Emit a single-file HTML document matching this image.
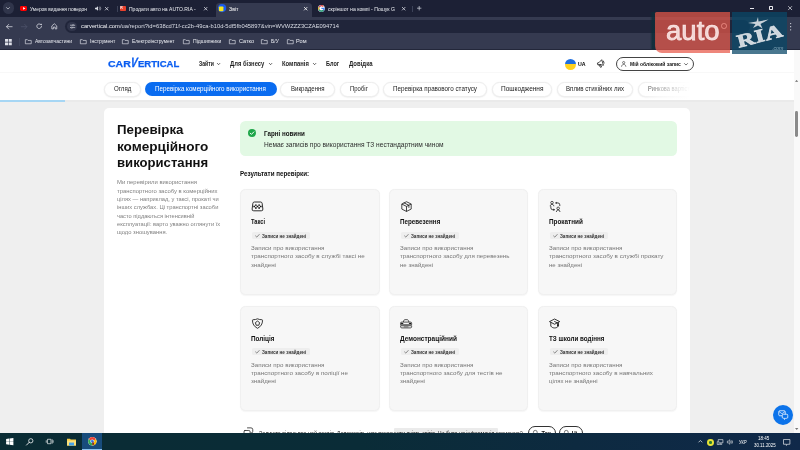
<!DOCTYPE html>
<html lang="uk"><head><meta charset="utf-8"><title>Звіт</title>
<style>
*{box-sizing:border-box;margin:0;padding:0}
html,body{width:800px;height:450px;overflow:hidden;background:#efefef;font-family:"Liberation Sans",sans-serif;}
#s{position:relative;width:800px;height:450px;overflow:hidden;background:#efefef;will-change:transform}
.a{position:absolute;white-space:nowrap}
svg{overflow:visible}
</style></head><body><div id="s">
<div class="a" style="left:0.00px;top:49.50px;width:793.50px;height:384.00px;background:#efefef;"></div>
<div class="a" style="left:104.20px;top:107.70px;width:586.00px;height:340.00px;background:#fff;border-radius:5px;"></div>
<div class="a" style="left:0.00px;top:49.50px;width:793.50px;height:51.00px;background:#fff;"></div>
<div class="a" style="left:0.00px;top:72.00px;width:793.50px;height:0.60px;background:#f8f8f8;"></div>
<div class="a" style="left:0.00px;top:100.30px;width:793.50px;height:1.80px;background:#eaeaea;"></div>
<div class="a" style="left:0.00px;top:99.90px;width:65.30px;height:2.30px;background:#a6d6f4;"></div>
<div class="a" style="left:108.00px;top:58.61px;font-size:8.80px;line-height:10.56px;transform:scaleX(1.1959);transform-origin:0 0;font-weight:bold;color:#0a5df0;-webkit-text-stroke:.25px #0a5df0;">CAR</div>
<div class="a" style="left:129.400px;top:60.300px;font-size:8.400px;line-height:10px;font-weight:bold;color:#0a5df0;-webkit-text-stroke:.2px #0a5df0;transform:skewX(-14deg) scale(1.18,1.62);transform-origin:0 100%">V</div>
<div class="a" style="left:137.80px;top:58.61px;font-size:8.80px;line-height:10.56px;transform:scaleX(1.0805);transform-origin:0 0;font-weight:bold;color:#0a5df0;-webkit-text-stroke:.25px #0a5df0;">ERTICAL</div>
<div class="a" style="left:198.60px;top:60.16px;font-size:6.40px;line-height:7.68px;transform:scaleX(0.8023);transform-origin:0 0;font-weight:bold;color:#1f1f1f;">Зайти</div>
<div class="a" style="left:230.30px;top:60.16px;font-size:6.40px;line-height:7.68px;transform:scaleX(0.9171);transform-origin:0 0;font-weight:bold;color:#1f1f1f;">Для бізнесу</div>
<div class="a" style="left:281.80px;top:60.16px;font-size:6.40px;line-height:7.68px;transform:scaleX(0.9191);transform-origin:0 0;font-weight:bold;color:#1f1f1f;">Компанія</div>
<div class="a" style="left:325.80px;top:60.16px;font-size:6.40px;line-height:7.68px;transform:scaleX(0.8709);transform-origin:0 0;font-weight:bold;color:#1f1f1f;">Блог</div>
<div class="a" style="left:349.00px;top:60.16px;font-size:6.40px;line-height:7.68px;transform:scaleX(0.9368);transform-origin:0 0;font-weight:bold;color:#1f1f1f;">Довідка</div>
<svg class="a" style="left:216.70px;top:63.30px;" width="3.20" height="2.10" viewBox="0 0 8 5"><path d="M1 1l3 3 3-3" fill="none" stroke="#222" stroke-width="1.9" stroke-linecap="round" stroke-linejoin="round"/></svg>
<svg class="a" style="left:268.50px;top:63.30px;" width="3.20" height="2.10" viewBox="0 0 8 5"><path d="M1 1l3 3 3-3" fill="none" stroke="#222" stroke-width="1.9" stroke-linecap="round" stroke-linejoin="round"/></svg>
<svg class="a" style="left:312.60px;top:63.30px;" width="3.20" height="2.10" viewBox="0 0 8 5"><path d="M1 1l3 3 3-3" fill="none" stroke="#222" stroke-width="1.9" stroke-linecap="round" stroke-linejoin="round"/></svg>
<div class="a" style="left:564.6px;top:58.6px;width:11px;height:11px;border-radius:50%;background:linear-gradient(#1e6fe0 50%,#ffd21f 50%)"></div>
<div class="a" style="left:578.30px;top:61.08px;font-size:5.20px;line-height:6.24px;transform:scaleX(1.0119);transform-origin:0 0;font-weight:bold;color:#000;">UA</div>
<svg class="a" style="left:596.00px;top:58.40px;" width="10.00" height="10.40" viewBox="0 0 24 25"><g transform="rotate(-18 12 12)"><path d="M3.500 9.500h4.500l8-4.500v14l-8-4.500H3.500z" fill="none" stroke="#222" stroke-width="1.800" stroke-linejoin="round"/><path d="M6 14.500l1.500 7h3l-1.500-7M19 9.500v5" fill="none" stroke="#222" stroke-width="1.800" stroke-linejoin="round" stroke-linecap="round"/></g></svg>
<div class="a" style="left:616px;top:57.4px;width:77.6px;height:13.4px;border:.6px solid #444;border-radius:7px;background:#fff"></div>
<svg class="a" style="left:621.30px;top:61.20px;" width="5.40" height="5.80" viewBox="0 0 12 13"><circle cx="6" cy="3.6" r="2.5" fill="none" stroke="#222" stroke-width="1.3"/><path d="M1.2 12c.4-3 2.3-4.3 4.8-4.3s4.4 1.300 4.800 4.300" fill="none" stroke="#222" stroke-width="1.3" stroke-linecap="round"/></svg>
<div class="a" style="left:629.80px;top:60.87px;font-size:5.50px;line-height:6.60px;transform:scaleX(0.9095);transform-origin:0 0;font-weight:bold;color:#111;">Мій обліковий запис</div>
<svg class="a" style="left:684.20px;top:62.80px;" width="4.00" height="2.60" viewBox="0 0 8 5"><path d="M1 1l3 3 3-3" fill="none" stroke="#222" stroke-width="1.3" stroke-linecap="round" stroke-linejoin="round"/></svg>
<div class="a" style="left:104.40px;top:81.8px;width:36.60px;height:14.8px;border-radius:7.4px;background:#fff;border:.6px solid #eeeeee;box-shadow:0 .5px 1.6px rgba(0,0,0,.09)"></div>
<div class="a" style="left:114.00px;top:85.39px;font-size:6.50px;line-height:7.80px;transform:scaleX(0.9408);transform-origin:0 0;color:#222;">Огляд</div>
<div class="a" style="left:145.00px;top:81.6px;width:131.80px;height:14.5px;border-radius:7.25px;background:#0a6cf0"></div>
<div class="a" style="left:155.40px;top:85.32px;font-size:6.60px;line-height:7.92px;transform:scaleX(0.9452);transform-origin:0 0;color:#fff;">Перевірка комерційного використання</div>
<div class="a" style="left:279.60px;top:81.8px;width:55.80px;height:14.8px;border-radius:7.4px;background:#fff;border:.6px solid #eeeeee;box-shadow:0 .5px 1.6px rgba(0,0,0,.09)"></div>
<div class="a" style="left:291.00px;top:85.39px;font-size:6.50px;line-height:7.80px;transform:scaleX(0.9295);transform-origin:0 0;color:#222;">Викрадення</div>
<div class="a" style="left:339.50px;top:81.8px;width:39.10px;height:14.8px;border-radius:7.4px;background:#fff;border:.6px solid #eeeeee;box-shadow:0 .5px 1.6px rgba(0,0,0,.09)"></div>
<div class="a" style="left:350.00px;top:85.39px;font-size:6.50px;line-height:7.80px;transform:scaleX(0.9156);transform-origin:0 0;color:#222;">Пробіг</div>
<div class="a" style="left:383.20px;top:81.8px;width:103.70px;height:14.8px;border-radius:7.4px;background:#fff;border:.6px solid #eeeeee;box-shadow:0 .5px 1.6px rgba(0,0,0,.09)"></div>
<div class="a" style="left:393.00px;top:85.39px;font-size:6.50px;line-height:7.80px;transform:scaleX(0.9635);transform-origin:0 0;color:#222;">Перевірка правового статусу</div>
<div class="a" style="left:492.40px;top:81.8px;width:59.60px;height:14.8px;border-radius:7.4px;background:#fff;border:.6px solid #eeeeee;box-shadow:0 .5px 1.6px rgba(0,0,0,.09)"></div>
<div class="a" style="left:501.00px;top:85.39px;font-size:6.50px;line-height:7.80px;transform:scaleX(1.0036);transform-origin:0 0;color:#222;">Пошкодження</div>
<div class="a" style="left:556.90px;top:81.8px;width:76.40px;height:14.8px;border-radius:7.4px;background:#fff;border:.6px solid #eeeeee;box-shadow:0 .5px 1.6px rgba(0,0,0,.09)"></div>
<div class="a" style="left:566.00px;top:85.39px;font-size:6.50px;line-height:7.80px;transform:scaleX(0.9405);transform-origin:0 0;color:#222;">Вплив стихійних лих</div>
<div class="a" style="left:638.00px;top:81.8px;width:82.00px;height:14.8px;border-radius:7.4px;background:#fff;border:.6px solid #eeeeee;box-shadow:0 .5px 1.6px rgba(0,0,0,.09)"></div>
<div class="a" style="left:648.00px;top:85.39px;font-size:6.50px;line-height:7.80px;transform:scaleX(0.8756);transform-origin:0 0;color:#222;">Ринкова вартість</div>
<div class="a" style="left:640px;top:78px;width:153.500px;height:21.500px;background:linear-gradient(90deg,rgba(255,255,255,0),rgba(255,255,255,.55) 18px,#fff 50px)"></div>
<div class="a" style="left:117.40px;top:123.25px;font-size:12.60px;line-height:15.12px;transform:scaleX(1.0551);transform-origin:0 0;font-weight:bold;color:#111;">Перевірка</div>
<div class="a" style="left:117.40px;top:139.70px;font-size:12.60px;line-height:15.12px;transform:scaleX(1.0782);transform-origin:0 0;font-weight:bold;color:#111;">комерційного</div>
<div class="a" style="left:117.40px;top:156.15px;font-size:12.60px;line-height:15.12px;transform:scaleX(1.0419);transform-origin:0 0;font-weight:bold;color:#111;">використання</div>
<div class="a" style="left:117.10px;top:179.15px;font-size:5.83px;line-height:7.00px;transform:scaleX(1.0145);transform-origin:0 0;color:#808080;">Ми перевірили використання</div>
<div class="a" style="left:117.10px;top:187.52px;font-size:5.83px;line-height:7.00px;transform:scaleX(1.0148);transform-origin:0 0;color:#808080;">транспортного засобу в комерційних</div>
<div class="a" style="left:117.10px;top:195.89px;font-size:5.83px;line-height:7.00px;transform:scaleX(0.9878);transform-origin:0 0;color:#808080;">цілях — наприклад, у таксі, прокаті чи</div>
<div class="a" style="left:117.10px;top:204.26px;font-size:5.83px;line-height:7.00px;transform:scaleX(0.9900);transform-origin:0 0;color:#808080;">інших службах. Ці транспортні засоби</div>
<div class="a" style="left:117.10px;top:212.63px;font-size:5.83px;line-height:7.00px;transform:scaleX(0.9745);transform-origin:0 0;color:#808080;">часто піддаються інтенсивній</div>
<div class="a" style="left:117.10px;top:221.00px;font-size:5.83px;line-height:7.00px;transform:scaleX(0.9859);transform-origin:0 0;color:#808080;">експлуатації: варто уважно оглянути їх</div>
<div class="a" style="left:117.10px;top:229.37px;font-size:5.83px;line-height:7.00px;transform:scaleX(0.9975);transform-origin:0 0;color:#808080;">щодо зношування.</div>
<div class="a" style="left:240.00px;top:121.30px;width:437.20px;height:34.40px;background:#e2f9e4;border-radius:5.5px;"></div>
<svg class="a" style="left:248.00px;top:129.00px;" width="8.00" height="8.00" viewBox="0 0 16 16"><circle cx="8" cy="8" r="8" fill="#1fa64a"/><path d="M4.4 8.300l2.500 2.500 4.800-5" fill="none" stroke="#fff" stroke-width="1.9" stroke-linecap="round" stroke-linejoin="round"/></svg>
<div class="a" style="left:264.00px;top:129.62px;font-size:6.60px;line-height:7.92px;transform:scaleX(0.9447);transform-origin:0 0;font-weight:bold;color:#111;">Гарні новини</div>
<div class="a" style="left:264.00px;top:141.17px;font-size:6.67px;line-height:8.00px;transform:scaleX(0.9902);transform-origin:0 0;color:#2c2c2c;">Немає записів про використання ТЗ нестандартним чином</div>
<div class="a" style="left:240.40px;top:170.42px;font-size:6.60px;line-height:7.92px;transform:scaleX(0.9461);transform-origin:0 0;font-weight:bold;color:#111;">Результати перевірки:</div>
<div class="a" style="left:240.00px;top:189.20px;width:139.5px;height:105.6px;background:#f7f7f7;border:.6px solid #f0f0f0;border-radius:5.5px;box-shadow:0 .4px 1.2px rgba(0,0,0,.04)"></div>
<svg class="a" style="left:252.00px;top:201.20px;" width="11.00" height="11.00" viewBox="0 0 24 24"><path d="M5.200 2.200h13.600a3.400 3.400 0 013.300 2.800l1.600 12.500a3.400 3.400 0 01-3.400 3.900H3.700a3.400 3.400 0 01-3.400-3.900L1.900 5a3.400 3.400 0 013.300-2.800z" fill="none" stroke="#111" stroke-width="1.900"/><path d="M6.600 7.400h3.600v3.100H6.600zM13.800 7.400h3.600v3.100h-3.600zM3 10.500h3.600v3.100H3zM10.200 10.500h3.600v3.100h-3.600zM17.400 10.500H21v3.100h-3.600zM6.600 13.600h3.600v3.100H6.600zM13.800 13.600h3.600v3.100h-3.600z" fill="#111"/></svg>
<div class="a" style="left:251.40px;top:218.27px;font-size:6.67px;line-height:8.00px;transform:scaleX(0.8582);transform-origin:0 0;font-weight:bold;color:#111;">Таксі</div>
<div class="a" style="left:251.80px;top:231.50px;width:58.20px;height:7.60px;background:#eeeeee;border-radius:1.6px;"></div>
<svg class="a" style="left:255.30px;top:233.70px;" width="4.80" height="3.60" viewBox="0 0 9 7"><path d="M1 3.800l2.300 2.300 4.700-5.100" fill="none" stroke="#444" stroke-width="1.200" stroke-linecap="round" stroke-linejoin="round"/></svg>
<div class="a" style="left:262.40px;top:232.52px;font-size:5.00px;line-height:6.00px;transform:scaleX(0.9135);transform-origin:0 0;font-weight:bold;color:#333;">Записи не знайдені</div>
<div class="a" style="left:251.20px;top:244.16px;font-size:6.25px;line-height:7.50px;transform:scaleX(0.9880);transform-origin:0 0;color:#767676;">Записи про використання</div>
<div class="a" style="left:251.20px;top:252.49px;font-size:6.25px;line-height:7.50px;transform:scaleX(1.0046);transform-origin:0 0;color:#767676;">транспортного засобу в службі таксі не</div>
<div class="a" style="left:251.20px;top:260.82px;font-size:6.25px;line-height:7.50px;transform:scaleX(0.9902);transform-origin:0 0;color:#767676;">знайдені</div>
<div class="a" style="left:388.90px;top:189.20px;width:139.5px;height:105.6px;background:#f7f7f7;border:.6px solid #f0f0f0;border-radius:5.5px;box-shadow:0 .4px 1.2px rgba(0,0,0,.04)"></div>
<svg class="a" style="left:400.90px;top:201.20px;" width="11.00" height="11.00" viewBox="0 0 24 24"><path d="M12 1.600l10.200 5v11l-10.200 5.200-10.200-5.200v-11zM1.800 6.600l10.200 5.200 10.200-5.200M12 11.800v11" fill="none" stroke="#111" stroke-width="1.700" stroke-linejoin="round"/><path d="M6.800 4.200l10.400 5.200v4.600" fill="none" stroke="#111" stroke-width="1.700" stroke-linejoin="round" stroke-linecap="round"/></svg>
<div class="a" style="left:400.30px;top:218.27px;font-size:6.67px;line-height:8.00px;transform:scaleX(0.9418);transform-origin:0 0;font-weight:bold;color:#111;">Перевезення</div>
<div class="a" style="left:400.70px;top:231.50px;width:58.20px;height:7.60px;background:#eeeeee;border-radius:1.6px;"></div>
<svg class="a" style="left:404.20px;top:233.70px;" width="4.80" height="3.60" viewBox="0 0 9 7"><path d="M1 3.800l2.300 2.300 4.700-5.100" fill="none" stroke="#444" stroke-width="1.200" stroke-linecap="round" stroke-linejoin="round"/></svg>
<div class="a" style="left:411.30px;top:232.52px;font-size:5.00px;line-height:6.00px;transform:scaleX(0.9135);transform-origin:0 0;font-weight:bold;color:#333;">Записи не знайдені</div>
<div class="a" style="left:400.10px;top:244.16px;font-size:6.25px;line-height:7.50px;transform:scaleX(0.9880);transform-origin:0 0;color:#767676;">Записи про використання</div>
<div class="a" style="left:400.10px;top:252.49px;font-size:6.25px;line-height:7.50px;transform:scaleX(0.9878);transform-origin:0 0;color:#767676;">транспортного засобу для перевезень</div>
<div class="a" style="left:400.10px;top:260.82px;font-size:6.25px;line-height:7.50px;transform:scaleX(0.9731);transform-origin:0 0;color:#767676;">не знайдені</div>
<div class="a" style="left:537.80px;top:189.20px;width:139.5px;height:105.6px;background:#f7f7f7;border:.6px solid #f0f0f0;border-radius:5.5px;box-shadow:0 .4px 1.2px rgba(0,0,0,.04)"></div>
<svg class="a" style="left:549.80px;top:201.20px;" width="11.00" height="11.00" viewBox="0 0 24 24"><circle cx="4.400" cy="3.600" r="2.800" fill="none" stroke="#111" stroke-width="1.500"/><path d="M.6 10.600c.3-2.400 1.700-3.200 3.800-3.200s3.500.8 3.800 3.200" fill="none" stroke="#111" stroke-width="1.700" stroke-linecap="round"/><circle cx="17.800" cy="16" r="2.800" fill="none" stroke="#111" stroke-width="1.500"/><path d="M14 23c.3-2.400 1.700-3.200 3.800-3.200s3.500.8 3.800 3.200" fill="none" stroke="#111" stroke-width="1.700" stroke-linecap="round"/><path d="M13.800 4.200h3.400a4.200 4.200 0 014.200 4.200v1.800" fill="none" stroke="#111" stroke-width="1.700" stroke-linecap="round"/><path d="M14.300 1.600l-3.300 2.600 3.300 2.600z" fill="#111"/><path d="M1.800 12.200v2.600a4.200 4.200 0 004.200 4.200h2" fill="none" stroke="#111" stroke-width="1.700" stroke-linecap="round"/><path d="M7.700 16.400l3.300 2.600-3.300 2.600z" fill="#111"/></svg>
<div class="a" style="left:549.20px;top:218.27px;font-size:6.67px;line-height:8.00px;transform:scaleX(0.9581);transform-origin:0 0;font-weight:bold;color:#111;">Прокатний</div>
<div class="a" style="left:549.60px;top:231.50px;width:58.20px;height:7.60px;background:#eeeeee;border-radius:1.6px;"></div>
<svg class="a" style="left:553.10px;top:233.70px;" width="4.80" height="3.60" viewBox="0 0 9 7"><path d="M1 3.800l2.300 2.300 4.700-5.100" fill="none" stroke="#444" stroke-width="1.200" stroke-linecap="round" stroke-linejoin="round"/></svg>
<div class="a" style="left:560.20px;top:232.52px;font-size:5.00px;line-height:6.00px;transform:scaleX(0.9135);transform-origin:0 0;font-weight:bold;color:#333;">Записи не знайдені</div>
<div class="a" style="left:549.00px;top:244.16px;font-size:6.25px;line-height:7.50px;transform:scaleX(0.9880);transform-origin:0 0;color:#767676;">Записи про використання</div>
<div class="a" style="left:549.00px;top:252.49px;font-size:6.25px;line-height:7.50px;transform:scaleX(1.0076);transform-origin:0 0;color:#767676;">транспортного засобу в службі прокату</div>
<div class="a" style="left:549.00px;top:260.82px;font-size:6.25px;line-height:7.50px;transform:scaleX(0.9731);transform-origin:0 0;color:#767676;">не знайдені</div>
<div class="a" style="left:240.00px;top:305.60px;width:139.5px;height:105.6px;background:#f7f7f7;border:.6px solid #f0f0f0;border-radius:5.5px;box-shadow:0 .4px 1.2px rgba(0,0,0,.04)"></div>
<svg class="a" style="left:252.00px;top:317.60px;" width="11.00" height="11.00" viewBox="0 0 24 24"><path d="M12 1.800c2.900 1.300 5.900 1.900 9.600 2 .9 0 1.400.5 1.400 1.400 0 7.600-3.400 13.400-11 17.300C4.400 18.600 1 12.800 1 5.200c0-.9.500-1.400 1.400-1.400 3.700-.1 6.700-.7 9.600-2z" fill="none" stroke="#111" stroke-width="1.800" stroke-linejoin="round"/><path d="M12 6.600l4.600 3.500-1.700 5.700H9.100l-1.700-5.700z" fill="none" stroke="#111" stroke-width="1.800" stroke-linejoin="round"/></svg>
<div class="a" style="left:251.40px;top:334.67px;font-size:6.67px;line-height:8.00px;transform:scaleX(0.9538);transform-origin:0 0;font-weight:bold;color:#111;">Поліція</div>
<div class="a" style="left:251.80px;top:347.90px;width:58.20px;height:7.60px;background:#eeeeee;border-radius:1.6px;"></div>
<svg class="a" style="left:255.30px;top:350.10px;" width="4.80" height="3.60" viewBox="0 0 9 7"><path d="M1 3.800l2.300 2.300 4.700-5.100" fill="none" stroke="#444" stroke-width="1.200" stroke-linecap="round" stroke-linejoin="round"/></svg>
<div class="a" style="left:262.40px;top:348.92px;font-size:5.00px;line-height:6.00px;transform:scaleX(0.9135);transform-origin:0 0;font-weight:bold;color:#333;">Записи не знайдені</div>
<div class="a" style="left:251.20px;top:360.56px;font-size:6.25px;line-height:7.50px;transform:scaleX(0.9880);transform-origin:0 0;color:#767676;">Записи про використання</div>
<div class="a" style="left:251.20px;top:368.89px;font-size:6.25px;line-height:7.50px;transform:scaleX(0.9976);transform-origin:0 0;color:#767676;">транспортного засобу в поліції не</div>
<div class="a" style="left:251.20px;top:377.22px;font-size:6.25px;line-height:7.50px;transform:scaleX(0.9902);transform-origin:0 0;color:#767676;">знайдені</div>
<div class="a" style="left:388.90px;top:305.60px;width:139.5px;height:105.6px;background:#f7f7f7;border:.6px solid #f0f0f0;border-radius:5.5px;box-shadow:0 .4px 1.2px rgba(0,0,0,.04)"></div>
<svg class="a" style="left:399.90px;top:319.20px;" width="12.20" height="9.40" viewBox="0 0 26 20"><path d="M6.800 6.600l1.700-3.900c.4-.9 1-1.300 2-1.300h5c1 0 1.600.4 2 1.300l1.700 3.900" fill="none" stroke="#111" stroke-width="1.500" stroke-linejoin="round"/><path d="M3.400 6.600h19.200a2.200 2.200 0 012.200 2.200v3.400H1.200V8.800a2.200 2.200 0 012.200-2.200z" fill="none" stroke="#111" stroke-width="1.500" stroke-linejoin="round"/><path d="M2.400 8l4.600 1.200v1.600H2.400zM23.600 8L19 9.200v1.600h4.600z" fill="#111"/><path d="M1.200 14.400h23.600v2a2.600 2.600 0 01-2.600 2.600H3.800a2.600 2.600 0 01-2.600-2.600z" fill="none" stroke="#111" stroke-width="1.500" stroke-linejoin="round"/><path d="M8 16.700h10" stroke="#111" stroke-width="1.100"/></svg>
<div class="a" style="left:400.30px;top:334.67px;font-size:6.67px;line-height:8.00px;transform:scaleX(0.9752);transform-origin:0 0;font-weight:bold;color:#111;">Демонстраційний</div>
<div class="a" style="left:400.70px;top:347.90px;width:58.20px;height:7.60px;background:#eeeeee;border-radius:1.6px;"></div>
<svg class="a" style="left:404.20px;top:350.10px;" width="4.80" height="3.60" viewBox="0 0 9 7"><path d="M1 3.800l2.300 2.300 4.700-5.100" fill="none" stroke="#444" stroke-width="1.200" stroke-linecap="round" stroke-linejoin="round"/></svg>
<div class="a" style="left:411.30px;top:348.92px;font-size:5.00px;line-height:6.00px;transform:scaleX(0.9135);transform-origin:0 0;font-weight:bold;color:#333;">Записи не знайдені</div>
<div class="a" style="left:400.10px;top:360.56px;font-size:6.25px;line-height:7.50px;transform:scaleX(0.9880);transform-origin:0 0;color:#767676;">Записи про використання</div>
<div class="a" style="left:400.10px;top:368.89px;font-size:6.25px;line-height:7.50px;transform:scaleX(0.9942);transform-origin:0 0;color:#767676;">транспортного засобу для тестів не</div>
<div class="a" style="left:400.10px;top:377.22px;font-size:6.25px;line-height:7.50px;transform:scaleX(0.9902);transform-origin:0 0;color:#767676;">знайдені</div>
<div class="a" style="left:537.80px;top:305.60px;width:139.5px;height:105.6px;background:#f7f7f7;border:.6px solid #f0f0f0;border-radius:5.5px;box-shadow:0 .4px 1.2px rgba(0,0,0,.04)"></div>
<svg class="a" style="left:549.10px;top:318.00px;" width="11.20" height="10.70" viewBox="0 0 24 23"><path d="M12 2.200l11 5.600-11 5.600L1 7.800zM3.800 9.400v8c2 2.700 4.800 4 8.200 4s6.200-1.300 8.200-4v-8" fill="none" stroke="#111" stroke-width="1.800" stroke-linejoin="round"/><path d="M12 7.600l6.800 3.300v4.600" fill="none" stroke="#111" stroke-width="1.800" stroke-linejoin="round" stroke-linecap="round"/><path d="M17.400 14.200h2.800v3.400h-2.800z" fill="#111"/></svg>
<div class="a" style="left:549.20px;top:334.67px;font-size:6.67px;line-height:8.00px;transform:scaleX(0.9399);transform-origin:0 0;font-weight:bold;color:#111;">ТЗ школи водіння</div>
<div class="a" style="left:549.60px;top:347.90px;width:58.20px;height:7.60px;background:#eeeeee;border-radius:1.6px;"></div>
<svg class="a" style="left:553.10px;top:350.10px;" width="4.80" height="3.60" viewBox="0 0 9 7"><path d="M1 3.800l2.300 2.300 4.700-5.100" fill="none" stroke="#444" stroke-width="1.200" stroke-linecap="round" stroke-linejoin="round"/></svg>
<div class="a" style="left:560.20px;top:348.92px;font-size:5.00px;line-height:6.00px;transform:scaleX(0.9135);transform-origin:0 0;font-weight:bold;color:#333;">Записи не знайдені</div>
<div class="a" style="left:549.00px;top:360.56px;font-size:6.25px;line-height:7.50px;transform:scaleX(0.9880);transform-origin:0 0;color:#767676;">Записи про використання</div>
<div class="a" style="left:549.00px;top:368.89px;font-size:6.25px;line-height:7.50px;transform:scaleX(1.0021);transform-origin:0 0;color:#767676;">транспортного засобу в навчальних</div>
<div class="a" style="left:549.00px;top:377.22px;font-size:6.25px;line-height:7.50px;transform:scaleX(0.9552);transform-origin:0 0;color:#767676;">цілях не знайдені</div>
<svg class="a" style="left:242.80px;top:427.40px;" width="10.80" height="9.60" viewBox="0 0 24 22"><path d="M9 2h9a4 4 0 014 4v4a4 4 0 01-4 4h-1M3 8h10a3 3 0 013 3v4a3 3 0 01-3 3H9l-3.500 3v-3H5a3 3 0 01-3-3v-4a3 3 0 013-3z" fill="none" stroke="#222" stroke-width="1.800" stroke-linejoin="round"/></svg>
<div class="a" style="left:394.00px;top:428.40px;width:103.60px;height:6.00px;background:#ebebeb;border-radius:1px;"></div>
<div class="a" style="left:258.50px;top:429.56px;font-size:6.40px;line-height:7.68px;transform:scaleX(0.8305);transform-origin:0 0;color:#1a1a1a;">Залиште відгук про цей розділ. Допоможіть нам покращити якість звітів. Чи була ця інформація корисною?</div>
<div class="a" style="left:528px;top:426.400px;width:28.200px;height:14px;border:.6px solid #333;border-radius:7px"></div>
<div class="a" style="left:559px;top:426.400px;width:23.600px;height:14px;border:.6px solid #333;border-radius:7px"></div>
<div class="a" style="left:541.60px;top:429.91px;font-size:5.60px;line-height:6.72px;font-weight:bold;color:#111;">Так</div>
<div class="a" style="left:571.80px;top:429.91px;font-size:5.60px;line-height:6.72px;font-weight:bold;color:#111;">Ні</div>
<svg class="a" style="left:532.60px;top:430.20px;" width="4.60" height="4.60" viewBox="0 0 10 10"><circle cx="5" cy="5" r="4.200" fill="none" stroke="#222" stroke-width="1.300"/></svg>
<svg class="a" style="left:563.60px;top:430.20px;" width="4.60" height="4.60" viewBox="0 0 10 10"><circle cx="5" cy="5" r="4.200" fill="none" stroke="#222" stroke-width="1.300"/></svg>
<div class="a" style="left:773px;top:404.8px;width:20.2px;height:20.2px;border-radius:50%;background:#0c73ea"></div>
<svg class="a" style="left:778.00px;top:410.00px;" width="10.50" height="10.00" viewBox="0 0 21 20"><path d="M3.500 1.500h9a2 2 0 012 2v6a2 2 0 01-2 2H3.500a2 2 0 01-2-2v-6a2 2 0 012-2z" fill="none" stroke="#fff" stroke-width="1.500"/><path d="M2 3l6 4.500 6-4.500" fill="none" stroke="#fff" stroke-width="1.300"/><path d="M10.500 8.500h7a2 2 0 012 2v4a2 2 0 01-2 2H15l-2 2.500v-2.500h-2.500a2 2 0 01-2-2v-4a2 2 0 012-2z" fill="#0c73ea" stroke="#fff" stroke-width="1.500" stroke-linejoin="round"/></svg>
<div class="a" style="left:793.50px;top:49.50px;width:6.50px;height:384.00px;background:#f9f9f9;"></div>
<div class="a" style="left:795.30px;top:110.60px;width:2.80px;height:26.80px;background:#8a8a8a;border-radius:1.4px;"></div>
<svg class="a" style="left:795.00px;top:428.40px;" width="3.40" height="2.00" viewBox="0 0 7 4"><path d="M0 0h7l-3.500 4z" fill="#777"/></svg>
<svg class="a" style="left:795.20px;top:79.60px;" width="3.20" height="1.90" viewBox="0 0 7 4"><path d="M0 4h7l-3.500-4z" fill="#666"/></svg>
<div class="a" style="left:0.00px;top:0.00px;width:800.00px;height:17.00px;background:#1c2035;"></div>
<div class="a" style="left:0.00px;top:16.90px;width:800.00px;height:32.00px;background:#353a50;"></div>
<div class="a" style="left:0.00px;top:48.60px;width:800.00px;height:1.00px;background:#23273a;"></div>
<div class="a" style="left:215.5px;top:3px;width:96px;height:14.2px;background:#353a50;border-radius:3.600px 3.600px 0 0"></div>
<div class="a" style="left:2.6px;top:2.400px;width:11.600px;height:11.600px;border-radius:50%;background:#30354b"></div>
<svg class="a" style="left:6.40px;top:7.20px;" width="4.00" height="2.60" viewBox="0 0 8 5"><path d="M1 1l3 3 3-3" fill="none" stroke="#d6d9e2" stroke-width="1.400" stroke-linecap="round" stroke-linejoin="round"/></svg>
<div class="a" style="left:20px;top:5.6px;width:7.4px;height:5.200px;border-radius:1.400px;background:#f00"></div>
<svg class="a" style="left:22.60px;top:6.80px;" width="2.60" height="2.80" viewBox="0 0 5 6"><path d="M0 0l5 3-5 3z" fill="#fff"/></svg>
<div class="a" style="left:30.00px;top:5.61px;font-size:5.30px;line-height:6.36px;transform:scaleX(0.9151);transform-origin:0 0;color:#eceef3;">Умеров видання поведон</div>
<svg class="a" style="left:94.50px;top:6.00px;" width="6.00" height="5.00" viewBox="0 0 12 10"><path d="M0 3.500h2.500L6 .5v9L2.500 6.500H0z" fill="#d6d9e2"/><path d="M8 2.500a3.500 3.500 0 010 5M9.800 1a6 6 0 010 8" fill="none" stroke="#d6d9e2" stroke-width="1.100"/></svg>
<svg class="a" style="left:104.80px;top:6.70px;" width="3.40" height="3.40" viewBox="0 0 10 10"><path d="M1 1l8 8M9 1l-8 8" stroke="#d6d9e2" stroke-width="2.35" stroke-linecap="round"/></svg>
<div class="a" style="left:116.60px;top:5.50px;width:0.50px;height:6.50px;background:#3c4258;"></div>
<div class="a" style="left:119.800px;top:6px;width:6px;height:4.600px;border-radius:.8px;background:#e8412c"></div>
<div class="a" style="left:120.30px;top:6.22px;font-size:3.40px;line-height:4.08px;font-weight:bold;color:#fff;">R</div>
<div class="a" style="left:129.30px;top:5.61px;font-size:5.30px;line-height:6.36px;transform:scaleX(0.9509);transform-origin:0 0;color:#eceef3;">Продати авто на AUTO.RIA - </div>
<svg class="a" style="left:203.90px;top:6.70px;" width="3.40" height="3.40" viewBox="0 0 10 10"><path d="M1 1l8 8M9 1l-8 8" stroke="#d6d9e2" stroke-width="2.35" stroke-linecap="round"/></svg>
<svg class="a" style="left:217.60px;top:4.40px;" width="8.20" height="8.20" viewBox="0 0 16 16"><circle cx="8" cy="8" r="8" fill="#1a5cf0"/><rect x="1.800" y="5" width="8.800" height="9" rx="1.500" fill="#f7e81c"/></svg>
<div class="a" style="left:229.00px;top:5.61px;font-size:5.30px;line-height:6.36px;transform:scaleX(0.9873);transform-origin:0 0;color:#fff;">Звіт</div>
<svg class="a" style="left:303.50px;top:6.70px;" width="3.40" height="3.40" viewBox="0 0 10 10"><path d="M1 1l8 8M9 1l-8 8" stroke="#fff" stroke-width="2.35" stroke-linecap="round"/></svg>
<svg class="a" style="left:317.50px;top:5.20px;" width="6.80" height="6.80" viewBox="0 0 14 14"><circle cx="7" cy="7" r="7" fill="#fff"/><path d="M7 7h5.500A5.500 5.500 0 117 1.500" fill="none" stroke="#4285f4" stroke-width="2.400"/><path d="M2.200 4.200A5.500 5.500 0 0111 3.200" fill="none" stroke="#ea4335" stroke-width="2.400"/><path d="M2.200 9.800A5.500 5.500 0 012.200 4.200" fill="none" stroke="#fbbc05" stroke-width="2.400"/><path d="M11 10.800A5.500 5.500 0 012.200 9.800" fill="none" stroke="#34a853" stroke-width="2.400"/></svg>
<div class="a" style="left:327.50px;top:5.61px;font-size:5.30px;line-height:6.36px;transform:scaleX(0.9619);transform-origin:0 0;color:#eceef3;">скріншот на компі - Пошук G</div>
<svg class="a" style="left:402.30px;top:6.70px;" width="3.40" height="3.40" viewBox="0 0 10 10"><path d="M1 1l8 8M9 1l-8 8" stroke="#d6d9e2" stroke-width="2.35" stroke-linecap="round"/></svg>
<div class="a" style="left:411.50px;top:5.50px;width:0.50px;height:6.50px;background:#3c4258;"></div>
<svg class="a" style="left:417.00px;top:6.40px;" width="4.40" height="4.40" viewBox="0 0 10 10"><path d="M5 0v10M0 5h10" stroke="#d6d9e2" stroke-width="1.600"/></svg>
<div class="a" style="left:750.00px;top:8.20px;width:4.00px;height:0.70px;background:#e8e9ee;"></div>
<div class="a" style="left:768.9px;top:6.2px;width:4.2px;height:4.2px;border:.8px solid #e8e9ee;border-radius:.8px"></div>
<svg class="a" style="left:788.30px;top:6.30px;" width="4.20" height="4.20" viewBox="0 0 10 10"><path d="M1 1l8 8M9 1l-8 8" stroke="#e8e9ee" stroke-width="1.67" stroke-linecap="round"/></svg>
<svg class="a" style="left:6.20px;top:23.60px;" width="6.40" height="5.40" viewBox="0 0 13 11"><path d="M5.500 .8L1 5.500l4.500 4.700M1.300 5.500H12.500" fill="none" stroke="#dfe1e9" stroke-width="1.500" stroke-linecap="round" stroke-linejoin="round"/></svg>
<svg class="a" style="left:20.60px;top:23.60px;" width="6.40" height="5.40" viewBox="0 0 13 11"><path d="M7.500 .8L12 5.500 7.500 10.200M11.700 5.500H.5" fill="none" stroke="#4f556c" stroke-width="1.500" stroke-linecap="round" stroke-linejoin="round"/></svg>
<svg class="a" style="left:36.00px;top:23.10px;" width="6.40" height="6.40" viewBox="0 0 13 13"><path d="M11.300 6.500a4.800 4.800 0 11-1.500-3.500" fill="none" stroke="#dfe1e9" stroke-width="1.500" stroke-linecap="round"/><path d="M11.800 .8v3.400H8.400z" fill="#dfe1e9"/></svg>
<svg class="a" style="left:50.80px;top:23.00px;" width="6.60" height="6.40" viewBox="0 0 13 13"><path d="M1.500 6L6.500 1.500 11.500 6v6h-3.200V8.300H4.700V12H1.500z" fill="none" stroke="#dfe1e9" stroke-width="1.500" stroke-linejoin="round"/></svg>
<div class="a" style="left:65px;top:19.600px;width:685px;height:13px;border-radius:6.500px;background:#20253a"></div>
<div class="a" style="left:67px;top:21.600px;width:10.400px;height:9.600px;border-radius:4.800px;background:#30354b"></div>
<svg class="a" style="left:69.60px;top:24.00px;" width="5.20" height="4.80" viewBox="0 0 11 10"><path d="M0 2.500h5M8 2.500h3M0 7.500h2.500M5.500 7.500H11" stroke="#e6e8ef" stroke-width="1.300"/><circle cx="6.500" cy="2.500" r="1.500" fill="none" stroke="#e6e8ef" stroke-width="1.200"/><circle cx="4" cy="7.500" r="1.500" fill="none" stroke="#e6e8ef" stroke-width="1.200"/></svg>
<div class="a" style="left:80.60px;top:23.00px;font-size:5.90px;line-height:7.08px;transform:scaleX(0.9806);transform-origin:0 0;color:#f4f5f8;">carvertical.com</div>
<div class="a" style="left:119.50px;top:23.00px;font-size:5.90px;line-height:7.08px;transform:scaleX(0.9847);transform-origin:0 0;color:#dcdfe8;">/ua/report?id=638cd71f-cc2b-49ca-b10d-5df5fb045897&amp;vin=WVWZZZ3CZAE094714</div>
<svg class="a" style="left:790.20px;top:23.20px;" width="1.30" height="7.40" viewBox="0 0 2 12"><circle cx="1" cy="1" r="1" fill="#dfe1e9"/><circle cx="1" cy="6" r="1" fill="#dfe1e9"/><circle cx="1" cy="11" r="1" fill="#dfe1e9"/></svg>
<svg class="a" style="left:5.00px;top:38.50px;" width="6.80" height="6.30" viewBox="0 0 14 13"><path d="M0 0h6.300v5.800H0zM7.700 0H14v5.800H7.700zM0 7.200h6.300V13H0zM7.700 7.200H14V13H7.700z" fill="#dfe1e9"/></svg>
<div class="a" style="left:19.30px;top:38.00px;width:0.50px;height:8.00px;background:#40465c;"></div>
<svg class="a" style="left:25.00px;top:39.40px;" width="6.60" height="5.20" viewBox="0 0 13 10"><path d="M.7 1.200h4l1.300 1.500h6.300v6.600H.7z" fill="none" stroke="#dfe1e9" stroke-width="1.300" stroke-linejoin="round"/></svg>
<div class="a" style="left:35.00px;top:39.45px;font-size:4.80px;line-height:5.76px;transform:scaleX(1.0376);transform-origin:0 0;color:#eceef3;">Автозапчастини</div>
<svg class="a" style="left:79.50px;top:39.40px;" width="6.60" height="5.20" viewBox="0 0 13 10"><path d="M.7 1.200h4l1.300 1.500h6.300v6.600H.7z" fill="none" stroke="#dfe1e9" stroke-width="1.300" stroke-linejoin="round"/></svg>
<div class="a" style="left:89.60px;top:39.45px;font-size:4.80px;line-height:5.76px;transform:scaleX(1.0425);transform-origin:0 0;color:#eceef3;">Інструмент</div>
<svg class="a" style="left:122.00px;top:39.40px;" width="6.60" height="5.20" viewBox="0 0 13 10"><path d="M.7 1.200h4l1.300 1.500h6.300v6.600H.7z" fill="none" stroke="#dfe1e9" stroke-width="1.300" stroke-linejoin="round"/></svg>
<div class="a" style="left:132.20px;top:39.45px;font-size:4.80px;line-height:5.76px;transform:scaleX(1.0033);transform-origin:0 0;color:#eceef3;">Електроінструмент</div>
<svg class="a" style="left:182.50px;top:39.40px;" width="6.60" height="5.20" viewBox="0 0 13 10"><path d="M.7 1.200h4l1.300 1.500h6.300v6.600H.7z" fill="none" stroke="#dfe1e9" stroke-width="1.300" stroke-linejoin="round"/></svg>
<div class="a" style="left:192.70px;top:39.45px;font-size:4.80px;line-height:5.76px;transform:scaleX(1.0654);transform-origin:0 0;color:#eceef3;">Підшипники</div>
<svg class="a" style="left:229.30px;top:39.40px;" width="6.60" height="5.20" viewBox="0 0 13 10"><path d="M.7 1.200h4l1.300 1.500h6.300v6.600H.7z" fill="none" stroke="#dfe1e9" stroke-width="1.300" stroke-linejoin="round"/></svg>
<div class="a" style="left:238.90px;top:39.45px;font-size:4.80px;line-height:5.76px;transform:scaleX(1.1521);transform-origin:0 0;color:#eceef3;">Сатко</div>
<svg class="a" style="left:260.90px;top:39.40px;" width="6.60" height="5.20" viewBox="0 0 13 10"><path d="M.7 1.200h4l1.300 1.500h6.300v6.600H.7z" fill="none" stroke="#dfe1e9" stroke-width="1.300" stroke-linejoin="round"/></svg>
<div class="a" style="left:271.00px;top:39.45px;font-size:4.80px;line-height:5.76px;transform:scaleX(1.0355);transform-origin:0 0;color:#eceef3;">Б/У</div>
<svg class="a" style="left:286.50px;top:39.40px;" width="6.60" height="5.20" viewBox="0 0 13 10"><path d="M.7 1.200h4l1.300 1.500h6.300v6.600H.7z" fill="none" stroke="#dfe1e9" stroke-width="1.300" stroke-linejoin="round"/></svg>
<div class="a" style="left:295.80px;top:39.45px;font-size:4.80px;line-height:5.76px;transform:scaleX(1.1718);transform-origin:0 0;color:#eceef3;">Ром</div>
<div class="a" style="left:0;top:433.200px;width:800px;height:16.800px;background:linear-gradient(90deg,#0a2c34 0%,#0a2c37 45%,#0d2a40 72%,#10294a 100%)"></div>
<svg class="a" style="left:6.30px;top:437.80px;" width="7.50" height="7.30" viewBox="0 0 15 15"><path d="M0 2.100L6.200 1.200v5.900H0zM7.100 1.100L15 0v7.100H7.100zM0 7.900h6.200v5.900L0 12.900zM7.100 7.900H15V15l-7.900-1.100z" fill="#fff"/></svg>
<svg class="a" style="left:26.00px;top:437.60px;" width="7.60" height="7.60" viewBox="0 0 15 15"><circle cx="9.500" cy="5.500" r="4.200" fill="none" stroke="#fff" stroke-width="1.500"/><path d="M6.500 8.500L1 14" stroke="#fff" stroke-width="1.700" stroke-linecap="round"/></svg>
<svg class="a" style="left:45.80px;top:438.00px;" width="7.40" height="7.00" viewBox="0 0 15 14"><path d="M3 2.500h7v9H3zM.5 4.500v5M12.500 2.500v9M14.500 4.500v5" fill="none" stroke="#fff" stroke-width="1.300"/></svg>
<svg class="a" style="left:66.80px;top:437.80px;" width="9.00" height="7.60" viewBox="0 0 18 15"><path d="M0 1.500h6l1.500 1.500H18V15H0z" fill="#f6c945"/><path d="M0 5h18v10H0z" fill="#fbe07a"/><path d="M4 9h10v6H4z" fill="#4aa3e8"/></svg>
<div class="a" style="left:82.00px;top:433.20px;width:19.80px;height:16.80px;background:#184c7c;"></div>
<div class="a" style="left:82.00px;top:449.00px;width:19.80px;height:1.00px;background:#8cc4ee;"></div>
<svg class="a" style="left:87.60px;top:437.40px;" width="8.60" height="8.60" viewBox="0 0 18 18"><circle cx="9" cy="9" r="9" fill="#fff"/><path d="M9 9L1.200 4.500A9 9 0 0116.800 4.500z" fill="#ea4335"/><path d="M9 9L16.800 4.500A9 9 0 019 18z" fill="#fbbc05"/><path d="M9 9L9 18A9 9 0 011.200 4.500z" fill="#34a853"/><circle cx="9" cy="9" r="4" fill="#fff"/><circle cx="9" cy="9" r="3.200" fill="#4285f4"/><path d="M10 8l3.500 8h-5z" fill="#7a1d1d"/></svg>
<svg class="a" style="left:698.00px;top:440.40px;" width="4.80" height="2.80" viewBox="0 0 10 6"><path d="M1 5l4-4 4 4" fill="none" stroke="#fff" stroke-width="1.400"/></svg>
<div class="a" style="left:707px;top:439px;width:6.800px;height:6.800px;border-radius:50%;background:#e8e337"></div>
<div class="a" style="left:709.2px;top:441.2px;width:2.400px;height:2.400px;border-radius:50%;background:#2f7d32"></div>
<svg class="a" style="left:717.40px;top:439.20px;" width="6.40" height="6.20" viewBox="0 0 13 12"><path d="M2.500 1h9.500v6.500H5M2.500 1v3M4.500 10.500h6M8 7.500v3" fill="none" stroke="#fff" stroke-width="1.200"/><path d="M.5 5h3.500v6H.5z" fill="none" stroke="#fff" stroke-width="1.100"/></svg>
<svg class="a" style="left:727.20px;top:439.20px;" width="6.20" height="6.00" viewBox="0 0 12 12"><path d="M.5 4.200h2L5.500 1.500v9L2.500 7.800h-2z" fill="none" stroke="#fff" stroke-width="1.100" stroke-linejoin="round"/><path d="M7.500 4a3 3 0 010 4M9.300 2.300a5.500 5.500 0 010 7.400" fill="none" stroke="#fff" stroke-width="1.100"/></svg>
<div class="a" style="left:738.50px;top:439.89px;font-size:4.60px;line-height:5.52px;transform:scaleX(0.8766);transform-origin:0 0;color:#fff;">УКР</div>
<div class="a" style="left:758.20px;top:435.79px;font-size:4.60px;line-height:5.52px;transform:scaleX(0.9903);transform-origin:0 0;color:#fff;">18:45</div>
<div class="a" style="left:753.50px;top:442.79px;font-size:4.60px;line-height:5.52px;transform:scaleX(0.9567);transform-origin:0 0;color:#fff;">30.11.2025</div>
<svg class="a" style="left:782.80px;top:438.60px;" width="7.40" height="7.00" viewBox="0 0 15 14"><path d="M1 1h13v9.500H9L7 13v-2.500H1z" fill="none" stroke="#fff" stroke-width="1.300" stroke-linejoin="round"/></svg>
<div class="a" style="left:649.500px;top:11.700px;width:6px;height:37.400px;background:linear-gradient(90deg,rgba(14,44,56,0),rgba(14,44,56,.8) 40%)"></div>
<div class="a" style="left:655px;top:11.700px;width:75.200px;height:41.700px;background:rgba(232,88,72,.72);border-radius:1.500px 0 0 7px"></div>
<div class="a" style="left:665.70px;top:15.11px;font-size:27.00px;line-height:32.40px;transform:scaleX(1.0200);transform-origin:0 0;color:rgba(255,240,238,.84);-webkit-text-stroke:.75px rgba(255,240,238,.84);">auto</div>
<div class="a" style="left:721.400px;top:23.300px;width:5.600px;height:5.600px;border-radius:50%;border:.9px solid rgba(255,160,150,.65)"></div>
<div class="a" style="left:731.800px;top:11.700px;width:55.400px;height:41.900px;background:rgba(10,72,104,.74)"></div>
<div class="a" style="left:736.500px;top:26.500px;width:46px;height:18px;transform:rotate(-14.500deg) scaleX(1.32);font-family:'Liberation Serif',serif;font-weight:bold;font-size:18.500px;line-height:18px;letter-spacing:.6px;color:rgba(222,227,232,.92);-webkit-text-stroke:.7px rgba(222,227,232,.92);text-align:center">RIA</div>
<svg class="a" style="left:747.50px;top:16.50px;" width="21.00" height="12.00" viewBox="0 0 42 24"><path d="M20 0l1 9 20-4-16 9 4 9-9-6-10 5 5-8-15-2 17-3z" fill="rgba(222,227,232,.9)"/></svg>
<div class="a" style="left:772.00px;top:44.54px;font-size:5.40px;line-height:6.48px;transform:scaleX(0.9827);transform-origin:0 0;color:rgba(170,200,215,.75);font-style:italic;">.com</div>
</div></body></html>
